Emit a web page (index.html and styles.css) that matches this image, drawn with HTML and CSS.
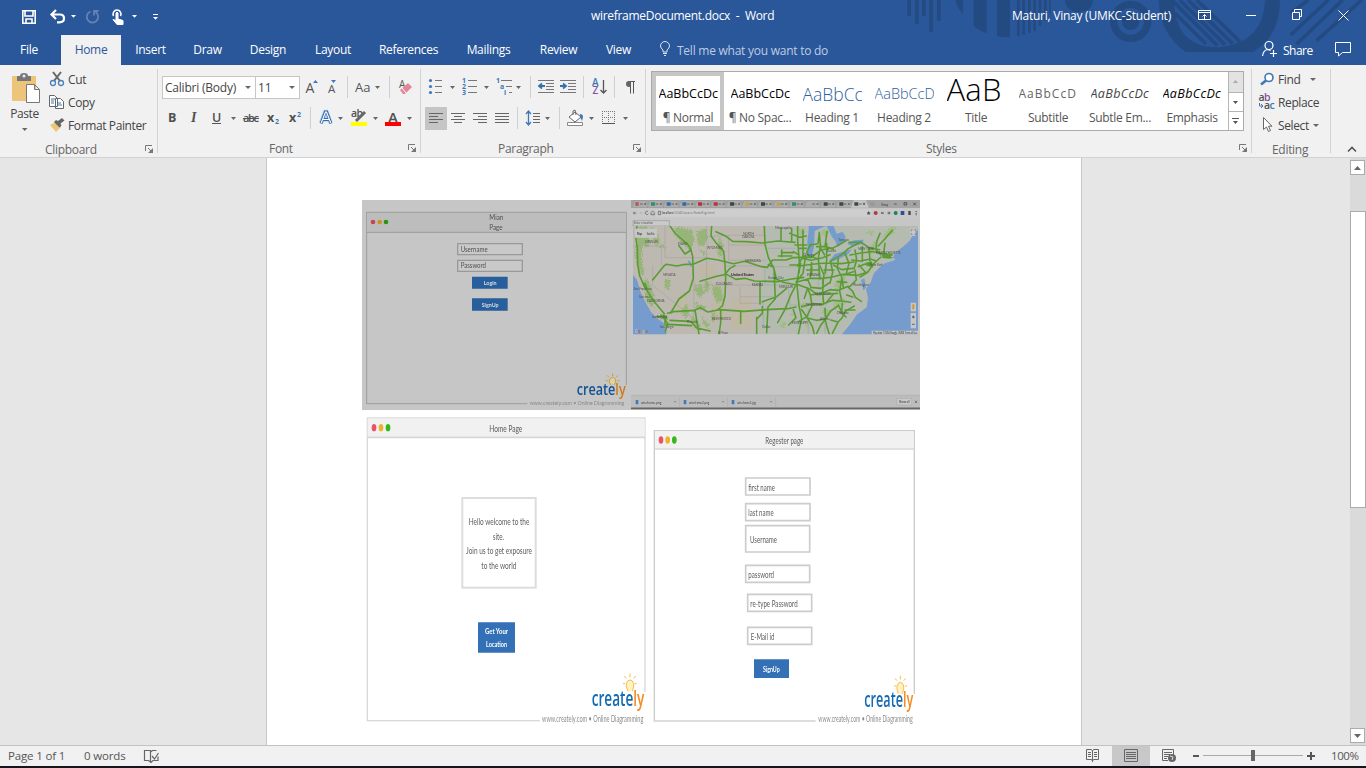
FILE: index.html
```html
<!DOCTYPE html>
<html lang="en">
<head>
<meta charset="utf-8">
<title>wireframeDocument.docx - Word</title>
<link rel="stylesheet" href="styles.css">
</head>
<body>
<div class="app">
<header class="head">
  <svg class="decor" width="466" height="65" viewBox="0 0 1398 195">
    <g fill="#234b82"><path d="M22 0h11v48H22zM45 0h11v71H45zM66 0h11v48H66zM88 0h11v97H88zM111 0h11v62h-11zM166 0h23v43q-17-20-23-43zM221 0h39v101q-24-9-39-22zM291 0h39v111q-20 3-39-3zM351 0h8v108h-8zM367 0h8v104h-8zM384 0h8v99h-8zM400 0h8v92h-8zM416 0h8v78h-8zM432 0h8v62h-8zM448 0h5v40h-5zM495 0h84q-4 36-42 36T495 0z"/><circle cx="692" cy="64" r="26"/><path d="M776 0h46q2 140 128 142Q1090 132 1095 0h45q0 110-82 156H857Q778 100 776 0z"/></g>
    <circle cx="692" cy="64" r="51" fill="none" stroke="#234b82" stroke-width="22"/>
    <path d="M820 5L952 137M824 39L918 132M839 0L975 134M864 0L998 131M890 0L1020 125M1225 0L1172 40M1285 0L1172 105M1328 0L1190 132M1385 0L1250 122" stroke="#234b82" stroke-width="11"/>
  </svg>
  <div class="title">
    <svg width="170" height="35" viewBox="0 0 170 35"><g fill="none" stroke="#fff" stroke-width="1.6"><path d="M22.8 10.8h12.4v12.4H22.8zM25 11v5h8v-5M26 23v-4h6v4"/><path d="M52 14.500h8q4 0 4 4t-5 3.800h-2M56 10l-4.500 4.500L56 19" stroke-width="2.2"/><path d="M90.500 11.500a5.700 5.700 0 1 0 5 .5M94 15.500v-4.500h4.500" stroke="#6482b4" stroke-width="1.800"/><path d="M113.500 16a4 4 0 1 1 7 0"/></g><path d="M116 13q1-2 2 0v6l5 1.500v4h-6l-4-5 3 1z" stroke="#fff" fill="#fff"/><path d="M71 15h5l-2.500 2.800zM132 15h5l-2.500 2.800zM153 17h5l-2.500 2.800zM153 14h5v1h-5z" fill="#fff"/></svg>
    <span class="docname">wireframeDocument.docx&nbsp; -&nbsp; Word</span>
    <span class="user">Maturi, Vinay (UMKC-Student)</span>
    <svg width="174" height="35" viewBox="1192 0 174 35" fill="none" stroke="#fff"><path d="M1198.500 10.500h12v9h-12zM1198 12.500h13M1204.500 19v-4.500m-2 2l2-2 2 2M1246 15.500h10M1292.500 12.500h7v7h-7zM1294.500 12v-2.500h7v7h-2.500M1338.500 10.500l10 10m0-10l-10 10"/></svg>
  </div>
  <nav class="tabs">
    <span class="tab file">File</span><span class="tab active">Home</span><span class="tab t-ins">Insert</span><span class="tab t-draw">Draw</span><span class="tab t-des">Design</span><span class="tab t-lay">Layout</span><span class="tab t-ref">References</span><span class="tab t-mail">Mailings</span><span class="tab t-rev">Review</span><span class="tab t-view">View</span>
    <svg width="32" height="30" viewBox="645 35 32 30" fill="none" stroke="#dde5f2"><path d="M663 52v-2q-2.500-2-2.500-4a4.500 4.500 0 0 1 9 0q0 2-2.500 4v2zM663 53.500h4M664 55.500h2"/></svg>
    <span class="tell">Tell me what you want to do</span>
    <svg width="24" height="30" viewBox="1259 35 24 30" fill="none" stroke="#fff" stroke-width="1.200"><circle cx="1269" cy="45.500" r="4"/><path d="M1262.500 56q1-6 5-6.500l3 1M1273.500 50v7M1270 53.500h7"/></svg>
    <span class="share">Share</span>
    <svg width="52" height="30" viewBox="1314 35 52 30" fill="none" stroke="#fff"><path d="M1335.500 42.500h15v10h-8l-4 3.500v-3.500h-3z"/></svg>
  </nav>
</header>

<section class="ribbon">
  <div class="group g-clip">
    <div class="clipbody">
      <div class="paste">
        <svg width="34" height="36" viewBox="9 70 34 36"><path d="M13 76h24v25H13z" fill="#ecc57b"/><path d="M18 76h3q0-3 4-3t4 3h3v5H18z" fill="#777"/><circle cx="25" cy="76" r="1.500" fill="#eee"/><path d="M27.500 84.500h8l5 5v13h-13zM35.500 84.500v5h5" fill="#fff" stroke="#777"/></svg>
        <span>Paste</span>
        <svg width="6" height="4" viewBox="0 0 6 4"><path d="M0 0h5.500L2.700 3z" fill="#666"/></svg>
      </div>
      <div class="cliplist">
        <span class="cmd"><svg width="19" height="23" viewBox="49 68 19 23"><path d="M53 72l7 9M61 72l-7 9" stroke="#666" stroke-width="2"/><g fill="none" stroke="#4a80b8" stroke-width="1.300"><circle cx="53" cy="83" r="2.500"/><circle cx="61" cy="83" r="2.500"/></g></svg>Cut</span>
        <span class="cmd"><svg width="19" height="23" viewBox="49 91 19 23" fill="#fff" stroke="#666"><path d="M49.500 95.500h5l3 3v8h-8zM55.500 98.500h5l3 3v7h-8z"/><path d="M51 99h4m-4 2h3m-3 2h3M57 103h4m-4 2h5" stroke="#3f78b5"/></svg>Copy</span>
        <span class="cmd"><svg width="19" height="23" viewBox="49 114 19 23"><path d="M50 125l6-3 5 5-5 5z" fill="#ecc57b"/><path d="M54 122l2-2 2 1 4-3 2.500 2.500-4 3 1 2-2 2z" fill="#666"/></svg>Format Painter</span>
      </div>
    </div>
    <div class="label l-clip">Clipboard<svg class="launch" width="9" height="9" viewBox="0 0 9 9"><path d="M.5 6V.5H7M3 3l4 4" fill="none" stroke="#777"/><path d="M8 3v5H3z" fill="#777"/></svg></div>
  </div>

  <div class="group g-font">
    <div class="row">
      <span class="combo c-name">Calibri (Body)<i class="arr"></i></span><span class="combo c-size">11<i class="arr"></i></span>
      <svg width="114" height="24" viewBox="300 75 114 24"><g fill="#555" font-family="Open Sans"><text x="305.500" y="93" font-size="14">A</text><text x="328" y="93" font-size="11.500">A</text><text x="355" y="92" font-size="13">Aa</text><text x="399" y="88" font-size="10">A</text></g><path d="M313 83h5l-2.500-3zM331 80h5l-2.500 3z" fill="#3f78b5"/><path d="M347.500 76v22M389.500 76v22" stroke="#d0d0d0"/><path d="M375 86h5l-2.500 3z" fill="#666"/><path d="M400 90l8-7 4 4-7 7h-2z" fill="#e5859a"/><path d="M402 88l4 5" stroke="#fff"/></svg>
    </div>
    <div class="row">
      <svg width="252" height="24" viewBox="162 106 252 24"><g fill="#505050" font-family="Open Sans" font-size="12.500"><text x="168" y="122" font-weight="700">B</text><text x="191" y="122" font-family="Liberation Serif" font-style="italic" font-weight="700" font-size="14">I</text><text x="212" y="122" font-weight="600">U</text><text x="243" y="122" font-size="11" font-weight="600" textLength="16">abc</text><text x="267" y="122" font-weight="700">x</text><text x="289" y="122" font-weight="700">x</text><text x="351" y="117" font-size="10.500" font-weight="600" textLength="12">ab</text><text x="388" y="123" font-size="15" font-weight="600">A</text></g><g fill="#3f78b5" font-family="Open Sans" font-size="7" font-weight="700"><text x="275" y="124">2</text><text x="297" y="117">2</text></g><path d="M212 123.500h9M243 118.500h16" stroke="#555"/><path d="M321 123l4.200-11h1.200l4.200 11M322.500 119.500h6.500" fill="none" stroke="#b4d2f0" stroke-width="4.500"/><path d="M321 123.500l4.200-11.500h1.600l4.200 11.500M322.500 119.500h6.500" fill="none" stroke="#376da8" stroke-width="2.800"/><path d="M321.200 123l4.300-11h1l4.300 11M322.500 119.500h6.500" fill="none" stroke="#fff" stroke-width="1.100"/><path d="M310.500 107v22" stroke="#d0d0d0"/><path d="M231 117h5l-2.500 3zM338 117h5l-2.500 3zM373 117h5l-2.500 3zM407 117h5l-2.500 3z" fill="#666"/><path d="M356 121l9-9" stroke="#666" stroke-width="3"/><path d="M351 122h16v4h-16z" fill="#ff0"/><path d="M385 122h16v4h-16z" fill="red"/></svg>
    </div>
    <div class="label l-font">Font<svg class="launch" width="9" height="9" viewBox="0 0 9 9"><path d="M.5 6V.5H7M3 3l4 4" fill="none" stroke="#777"/><path d="M8 3v5H3z" fill="#777"/></svg></div>
  </div>

  <div class="group g-para">
    <div class="row">
      <svg width="220" height="24" viewBox="424 75 220 24"><g fill="#3f78b5"><circle cx="430.500" cy="80.500" r="1.600"/><circle cx="430.500" cy="86.500" r="1.600"/><circle cx="430.500" cy="92.500" r="1.600"/><g font-family="Open Sans" font-size="7" font-weight="700"><text x="462" y="83">1</text><text x="462" y="89">2</text><text x="462" y="95">3</text><text x="496" y="83">1</text><text x="500" y="89">a</text><text x="504" y="95">i</text></g></g><path d="M435 80.500h7m-7 6h7m-7 6h7M468 80.500h9m-9 6h9m-9 6h9M501 80.500h11m-6 6h6m-3 6h3M538 80.500h16m-8 3h8m-8 3h8m-8 3h8m-16 3h16M560 80.500h16m-8 3h8m-8 3h8m-8 3h8m-16 3h16" stroke="#777"/><path d="M545 86h-6m3-2.500l-3 2.500 3 2.500M560 86h6m-3-2.500l3 2.500-3 2.500" stroke="#3572b0" stroke-width="1.800" fill="none"/><path d="M450 86h5l-2.500 3zM484 86h5l-2.500 3zM516 86h5l-2.500 3z" fill="#666"/><path d="M530.500 76v22M583.500 76v22M614.500 76v22" stroke="#d0d0d0"/><g font-family="Open Sans" font-size="10" font-weight="600"><text x="592" y="86" fill="#3f78b5">A</text><text x="592.500" y="94" fill="#8250a6">Z</text></g><path d="M603.500 80v13m-3-3l3 3 3-3" fill="none" stroke="#555" stroke-width="1.300"/><path d="M628 81.500h7m-4.500 0v12m3-12v12" stroke="#555"/><path d="M629 81a3 3 0 0 0 0 6h1.500v-6z" fill="#666"/></svg>
    </div>
    <div class="row">
      <svg width="220" height="24" viewBox="424 106 220 24"><path d="M425 107h22v23h-22z" fill="#c5c5c5"/><path d="M429 113.500h14m-14 3h9m-9 3h14m-14 3h9M451 113.500h14m-11 3h8m-11 3h14m-11 3h8M473 113.500h14m-9 3h9m-14 3h14m-9 3h9M495 113.500h14m-14 3h14m-14 3h14m-14 3h14M533 113.500h7m-7 3h7m-7 3h7m-7 3h7" stroke="#666"/><path d="M528.500 111v14m-2.500-11l2.500-3 2.500 3m-5 8l2.500 3 2.500-3" fill="none" stroke="#3f78b5" stroke-width="1.300"/><path d="M517.500 107v22M559.500 107v22" stroke="#d0d0d0"/><path d="M545 117h5l-2.500 3zM589 117h5l-2.500 3zM623 117h5l-2.500 3z" fill="#666"/><path d="M575 112l6 5-6 5-6-5zM573 115v-4l2-1 1 5" fill="#fff" stroke="#666"/><path d="M580 114q3 0 3 3l-1 4-2-4z" fill="#3f78b5"/><path d="M567.500 122.500h15v3h-15z" fill="#fff" stroke="#888"/><path d="M602 111.500h13M602 117.500h13M602.500 111v12M608.500 111v12M614.500 111v12" stroke="#777" stroke-dasharray="1 1"/><path d="M602 123.500h13" stroke="#555"/></svg>
    </div>
    <div class="label l-para">Paragraph<svg class="launch" width="9" height="9" viewBox="0 0 9 9"><path d="M.5 6V.5H7M3 3l4 4" fill="none" stroke="#777"/><path d="M8 3v5H3z" fill="#777"/></svg></div>
  </div>

  <div class="group g-styles">
    <div class="gallery">
      <div class="style sel"><span class="pv">AaBbCcDc</span><span class="nm">¶ Normal</span></div>
      <div class="style"><span class="pv">AaBbCcDc</span><span class="nm">¶ No Spac...</span></div>
      <div class="style"><span class="pv h1">AaBbCc</span><span class="nm">Heading 1</span></div>
      <div class="style"><span class="pv h2">AaBbCcD</span><span class="nm">Heading 2</span></div>
      <div class="style"><span class="pv big">AaB</span><span class="nm">Title</span></div>
      <div class="style"><span class="pv sub">AaBbCcD</span><span class="nm">Subtitle</span></div>
      <div class="style"><span class="pv em soft">AaBbCcDc</span><span class="nm">Subtle Em...</span></div>
      <div class="style"><span class="pv em">AaBbCcDc</span><span class="nm">Emphasis</span></div>
      <svg width="15" height="58" viewBox="0 0 15 58"><path d="M0 0h15v20H0z" fill="#e3e3e3"/><path d="M.5 0v58M0 20.500h15M0 39.500h15" stroke="#b5b5b5"/><path d="M5 11h5L7.500 8z" fill="#aaa"/><path d="M5 29h5l-2.500 3zM5 49h5l-2.500 3zM4 46h7v1H4z" fill="#555"/></svg>
    </div>
    <div class="label l-styles">Styles<svg class="launch" width="9" height="9" viewBox="0 0 9 9"><path d="M.5 6V.5H7M3 3l4 4" fill="none" stroke="#777"/><path d="M8 3v5H3z" fill="#777"/></svg></div>
  </div>

  <div class="group g-edit">
    <div class="editlist">
      <span class="cmd"><svg width="20" height="23" viewBox="1258 68 20 23"><circle cx="1269" cy="77.500" r="4" fill="#fff" stroke="#3f78b5" stroke-width="1.600"/><path d="M1266 80.500l-5 4" stroke="#3f78b5" stroke-width="2.600"/></svg>Find<i class="arr a1"></i></span>
      <span class="cmd"><svg width="20" height="23" viewBox="1258 91 20 23" font-family="Open Sans" font-size="10.500" font-weight="600"><text x="1258.500" y="101" fill="#555">a</text><text x="1264" y="101" fill="#8250a6">b</text><text x="1264" y="108.500" fill="#555">a</text><text x="1269.500" y="108.500" fill="#3f78b5">c</text><path d="M1259.500 103v3h3m-1.500-2l2 2-2 2" fill="none" stroke="#3f78b5"/></svg>Replace</span>
      <span class="cmd"><svg width="20" height="23" viewBox="1258 114 20 23"><path d="M1263.500 117.500v12l3-2.500 2 4.500 2-1-2-4.300h3.500z" fill="#fff" stroke="#666"/></svg>Select<i class="arr a2"></i></span>
    </div>
    <div class="label l-edit">Editing</div>
  </div>
  <svg class="collapse" width="10" height="7" viewBox="0 0 10 7"><path d="M1 5.500l4-4 4 4" fill="none" stroke="#555" stroke-width="1.600"/></svg>
</section>

<main class="workspace">
  <article class="page">
    <div class="pics">
    <svg class="pic" width="269" height="210" viewBox="6 15 807 630">
      <rect x="0" y="0" width="820" height="660" fill="#c6c6c6"/>
      <rect x="20" y="52" width="779" height="574" fill="none" stroke="#9c9c9c" stroke-width="3"/><rect x="21" y="54" width="777" height="57" fill="#bdbdbd"/><path d="M20 112h779" stroke="#999" stroke-width="3"/>
      <circle cx="39" cy="81" r="7" fill="#c7435a"/><circle cx="59" cy="81" r="7" fill="#c9951e"/><circle cx="78" cy="81" r="7" fill="#289514"/>
      <g fill="#505050" font-size="20"><text x="388" y="76" textLength="42" lengthAdjust="spacingAndGlyphs">Mian</text><text x="388" y="104" textLength="40" lengthAdjust="spacingAndGlyphs">Page</text></g>
      <g fill="#c9c9c9" stroke="#999" stroke-width="4"><path d="M293 146h194v33H293zM293 196h194v33H293z"/></g>
      <g fill="#505050" font-size="20"><text x="302" y="170" textLength="81" lengthAdjust="spacingAndGlyphs">Username</text><text x="302" y="220" textLength="76" lengthAdjust="spacingAndGlyphs">Password</text></g>
      <path d="M336 245h107v36H336zM336 310h107v37H336z" fill="#285e9b"/>
      <g fill="#d5dde6" font-size="17" font-weight="700"><text x="371" y="270" textLength="39" lengthAdjust="spacingAndGlyphs">Login</text><text x="365" y="335" textLength="51" lengthAdjust="spacingAndGlyphs">SignUp</text></g>
      <path d="M502 612h304v33H502zM790 570h12v50h-12z" fill="#c6c6c6"/>
      <path d="M753 568q-7-7-5-13 3-8 10-8t9 8q2 6-5 13z" fill="#ded3a0"/><path d="M758 536v7M741 541l5 5M774 541l-5 5M737 557h6M773 557h6M753 570q-7-8-5-15 3-8 10-8t9 8q2 7-5 15" fill="none" stroke="#c99b3e" stroke-width="3"/>
      <text x="650" y="600" font-family="Open Sans" font-size="46" font-weight="600" fill="#125293" textLength="147" lengthAdjust="spacingAndGlyphs">create<tspan fill="#ce7919">ly</tspan></text>
      <text x="509" y="629" fill="#888" font-size="19" textLength="284" lengthAdjust="spacingAndGlyphs">www.creately.com • Online Diagramming</text>
    </svg><svg class="pic" width="289" height="210" viewBox="18 15 867 630">
      <defs>
        <clipPath id="mapclip"><path d="M24 93h855v325H24z"/></clipPath>
        <filter id="rough"><feTurbulence type="fractalNoise" baseFrequency=".25" numOctaves="4" seed="4"/><feDisplacementMap in="SourceGraphic" scale="20" xChannelSelector="R" yChannelSelector="G"/></filter>
        <g id="tab"><path d="M0 38L8 17H43L51 38z" fill="#adadad" stroke="#888"/><path d="M38 24l5 6m0-6l-5 6" stroke="#555" stroke-width="2"/><path d="M25 27h8" stroke="#777" stroke-width="4"/></g>
      </defs>
      <path d="M18 15h867v630H18z" fill="#c6c6c6"/><path d="M18 15h867v25H18z" fill="#a4a4a4"/>
      <use href="#tab" x="20"/><use href="#tab" x="67"/><use href="#tab" x="114"/><use href="#tab" x="161"/><use href="#tab" x="208"/><use href="#tab" x="255"/><use href="#tab" x="302"/><use href="#tab" x="349"/><use href="#tab" x="396"/><use href="#tab" x="443"/><use href="#tab" x="490"/><use href="#tab" x="537"/><use href="#tab" x="584"/><use href="#tab" x="631"/><path d="M678 38l8-22h37l8 22z" fill="#c6c6c6"/><path d="M732 21h15l6 12h-15z" fill="#999"/>
      <g fill="none" stroke-width="11"><path d="M31 27h10" stroke="#b65a55"/><path d="M78 27h12M501 27h12" stroke="#33906a"/><path d="M125 27h12M172 27h12" stroke="#2c6ca8"/><path d="M219 27h12M266 27h12" stroke="#bd3035"/><path d="M315 27h12M408 27h12M596 27h12M643 27h12M688 27h12" stroke="#39484b"/><path d="M361 27h12M455 27h12" stroke="#c3a052"/></g>
      <path d="M702 27h8m4-4l6 7m0-7l-6 7M807 27h8M837 23h8v7h-8zM865 23l8 8m0-8l-8 8" stroke="#333" stroke-width="2" fill="none"/><text x="768" y="32" font-size="13" fill="#333" textLength="22" lengthAdjust="spacingAndGlyphs">Vinay</text>
      <path d="M18 40h867v29H18z" fill="#c8c8c8"/><path d="M93 43h647v22H93z" fill="#cecece"/>
      <path d="M34 54h-9m4-4l-4 4 4 4M69 50a5 5 0 1 0 1 6M78 53l5-5 5 5v6h-10zM100 49h7v10h-7z" fill="none" stroke="#555" stroke-width="2"/><path d="M44 54h7" stroke="#999" stroke-width="2"/><text x="111" y="58" font-size="13" fill="#777" textLength="157" lengthAdjust="spacingAndGlyphs"><tspan fill="#333">localhost</tspan>:51042/source/HomePage.html</text>
      <g fill="#b4393b"><circle cx="752" cy="54" r="6"/><circle cx="812" cy="54" r="6" fill="#18864c"/><path fill="#285297" d="M827 48h11v12h-11z"/><path fill="#444" d="M850 48h7v12h-7zM872 48h3v3h-3zM872 53h3v3h-3zM872 58h3v3h-3z"/><path fill="#777" d="M768 51h8v6h-8zM788 50h8v8h-8z"/><path fill="#555" d="M731 48l2 4 4 1-3 3 1 4-4-2-4 2 1-4-3-3 4-1z"/></g>
      <path d="M24 77h109v16H24z" fill="#cacaca" stroke="#999" stroke-width="2"/><text x="27" y="88" font-size="11" fill="#555" textLength="57" lengthAdjust="spacingAndGlyphs">Enter a location</text>
      <g clip-path="url(#mapclip)">
        <path d="M24 93h855v325H24z" fill="#bdb9b1"/>
        <path d="M420 93h459v325H400z" fill="#b5bbb0"/>
        <g fill="#bfb89c" opacity=".6"><path d="M260 320h45v55h-45zM220 210h50v35h-50zM150 310l30-20 15 40-40 30zM320 310h60v90h-60z"/></g>
        <g filter="url(#rough)" fill="#91b36f" opacity=".85">
          <path d="M40 95l25-2 5 25 5 25-10 15-12-10-3 30 8 60-10 5-18-60zM80 95l15 15 10 30-12 15-8-25zM150 95l50 10 8 30-10 35-20-20-25-25zM215 110l28-10 5 35-15 20-15-5zM222 160l20 10-4 15zM60 250l12 10 15 40-4 40-16-20-12-50zM120 248l16 12-3 25-14-4zM205 275l25-5 8 25-15 15zM240 255l14 8-5 30-12-5zM262 270l25 5 10 40-20 8-14-25zM210 320l15 10 20 4-10 12-20-5zM195 362l20 10 15 25-20 3zM280 120l15 30-5 40-12-15zM170 350l15-25 5 35-10 12zM95 155l20-8 5 12zM262 345l10 15-5 25-8-10zM232 360l10 20 12 10-8 10-12-15z"/>
          <path fill="#9dbb7e" d="M525 330l20-10 5 12-20 12zM590 340l22 5 2 15-14 10zM625 325l30-15 10 10-35 25zM520 100l22 8-8 15-12-4zM590 102l20 2-4 20-15-5zM730 170l15-30 12 3-10 34zM770 130l25-35 20-2-10 25zM625 270l30-30 10 8-30 38zM470 378l12 4-3 18-12-5zM540 380l10 5-4 20zM720 110l30 0-12 12zM500 348l10 10-12 5z"/>
        </g>
        <path d="M24 240l12 14 10 35 14 30 18 32 20 20 18 13 10 36H24zM879 105l-12 10-13 22-20 18-22 16-8 17 8 6-36 12-14 13-15 15-10 28-14 19 6 28-4 28-30 22-18 27-30 36h245z" fill="#769cce"/>
        <path d="M551 93h52l-14 5-20 10-2 48-9 37-9-5-2-48 4-35zM605 93l20-2 10 25 18-5 9 14-10 21-14 10-7-18-10-12zM615 195l15-18 36-10 14-4-10 14-35 18-17 5zM666 146l22-10 28-2-4 13-30 7zM708 255l10-5 5 28-8 8zM188 196l7 2 7 17-8-2z" fill="#769cce"/>
        <path d="M24 153h85v58M120 93v95h125M245 93v180M245 125l66-4v75h110M311 150h115M311 121h108M302 213h118v55M206 270h280M206 215v150M345 275v50h70v75M83 211v60l110 88M345 305h100M429 160h82M429 215h92M495 330h110M490 275l5 60M580 200v75M605 190v60M550 340v78M600 340v78" fill="none" stroke="#999b96" stroke-width="1.200"/>
        <g fill="none" stroke="#599d32" stroke-width="4.800" stroke-linejoin="round" stroke-linecap="round">
          <path d="M36 93l-4 30 5 40 1 45 6 35 12 25 14 25 16 25 32 38M83 255l32-40 8-7 33 5 17-4 33-2 40-17 34 5 45 11 35-7 49 16 18 2 16-22h40l20-7 60-2 18 7"/>
          <path d="M135 93l17 24 37 32 9 16 5 20 2 65-12 38-31 24-25 42M198 165l-18 12-18-25M260 93l-2 30 15 20 23 26 4 40 2 40-2 55-8 29-15 12"/>
          <path d="M225 259l50-15 30-6 27 15 27-3 30 8 68 2 43-8 36-5M300 238l15-18 15-8M128 355l18-5 62-4 18-8 22 13 35-7 75 5 65-5 65-3 25-5M135 376l62 3 18 20 40 9M210 345l12 73M125 388l75 4M287 348v36l-5 34M347 350v35M376 353M412 335v20l-15 15M95 365h25v25M108 360l20 25-7 25"/>
          <path d="M273 110l30 14 20 15 40 1 50 4 45-6 52 4M418 93l2 55 10 39 17 34 4 90-22 25-4 77M430 209l16 8 7 30M468 100v36M460 183h40M470 165v20M470 173h35M395 368v48M412 320l43-15 30-25M405 262v65"/>
          <path d="M449 250l25 12 40 8M518 93v45l6 75-8 50-20 40-16 40-22 40M500 100v38M534 105v78l-16 30M516 270l6 62 8 38-10 48M494 115l30 12 20-4M510 150h35M505 170l14 8M495 210l26 0M520 160h24"/>
          <path d="M530 190l28 6 35-8 22-9M521 213l48-6 35-3 45 2 38-5M540 195l-6 40-20 25M560 203l-4 44M585 160l-5 30 5 62M605 145v50l-5 40M575 155h30l20 8"/>
          <path d="M555 150l24-4 4-34M583 115l4 45 12 20M606 110l-6 45M560 186l30-22 36-6 36-20M672 142l35-1 25 17 32 6M707 141l-37 20-20 18-35 20"/>
          <path d="M514 262l42-12 35 0 32-4 30-8 45 3 30-10M548 253l10 24 30 3 24-16M516 268l40 15 20 16 32-2 30-2M585 213l12 27-4 25M617 200l6 32-8 32M640 190l-3 30 13 26 5 30M660 175l12 30-8 30"/>
          <path d="M545 225h38M560 240v-25M597 225h30M625 210l25 14 33-4M675 180l33-6 34-4M690 165l5 30-8 26M712 155v44M732 158l3 40M680 195l26 3 30-6 16 5M700 215l20-8 22 8M720 230l-18-20"/>
          <path d="M765 115l-10 25-2 25 15 15M802 106l-22 25-20 22M780 145l-5 35M745 170l30 6 27 4M774 182l26 6M768 186l-20 18-20 28-23 14"/>
          <path d="M530 335l32-9 30 2 30-12 28 2 27 4M560 325l-4-25-8-20M595 253l-2 38 3 37M555 300l30-4 30-12 25 2 30-12M650 318l-6-30 6-35M668 275l15 14 8 18 18 12"/>
          <path d="M530 344l14 20 18 30 6 24M562 330l-16 34-25 16M544 368l30 8 28-4M575 415l12-24 15-19 15-24 20-14M600 372l5 20 8 26M617 375l22 6 12-12 10-20 27-16M652 325l-2 30M640 380l-18 35M600 340l2 32M505 344l8 24-22 22"/>
          <path d="M527 205l-6 30M548 280l-10 30M625 297l-20 25M637 260l28 2M655 240l30-10M690 225l4 30-20 20M665 300l18 6M660 345h30M645 350l18 16M640 330l10 20M553 186l-8-14 12-25"/>
        </g>
        <path d="M530 186l12-6 8 8-10 8zM772 176l28 5-6 10-22-2zM722 203l18-4 4 10-18 5zM50 262l12 3 6 15-9 0zM112 358l14 4 2 12-12-2z" fill="#599d32"/>
        <g fill="#4c4f4b" font-size="9"><text x="318" y="244" font-size="13" font-weight="700" fill="#222" textLength="69" lengthAdjust="spacingAndGlyphs">United States</text><text x="115" y="242">NEVADA</text><text x="60" y="143">OREGON</text><text x="158" y="150">IDAHO</text><text x="246" y="163">WYOMING</text><text x="355" y="119">NORTH</text><text x="352" y="129">DAKOTA</text><text x="361" y="201">NEBRASKA</text><text x="272" y="270">COLORADO</text><text x="380" y="274">KANSAS</text><text x="462" y="278">MISSOURI</text><text x="260" y="375">NEW MEXICO</text><text x="66" y="321">CALIFORNIA</text><text x="26" y="284">San Francisco</text><text x="42" y="308">San Jose</text><text x="80" y="369">Los Angeles</text><text x="105" y="399">San Diego</text><text x="185" y="383">Phoenix</text><text x="430" y="252">Kansas City</text><text x="535" y="184">Chicago</text><text x="605" y="172">Detroit</text><text x="640" y="137">Toronto</text><text x="700" y="164">NEW YORK</text><text x="752" y="177">MASSACHUSETTS</text><text x="735" y="212">New York</text><text x="684" y="272">Washington</text><text x="500" y="387">MISSISSIPPI</text><text x="585" y="375">Atlanta</text><text x="542" y="333">TENNESSEE</text><text x="570" y="299">KENTUCKY</text><text x="545" y="242">INDIANA</text><text x="635" y="358">Charlotte</text><text x="280" y="416">El Paso</text><text x="412" y="400">Dallas</text><text x="450" y="103">Minneapolis</text></g>
      </g>
      <path d="M30 101h66v27H30zM857 323h16v26h-16zM857 354h16v46h-16zM856 100h16v23h-16zM740 407h139v11H740z" fill="#c6c6c6"/><g fill="#333" font-size="10"><text x="36" y="119" font-weight="700" textLength="15" lengthAdjust="spacingAndGlyphs">Map</text><text x="65" y="119" textLength="24" lengthAdjust="spacingAndGlyphs">Satellite</text><text x="744" y="416" font-size="9" textLength="133" lengthAdjust="spacingAndGlyphs">Map data ©2016 Google, INEGI   Terms of Use</text></g>
      <path d="M865 362v8m-4-4h8M861 388h8" stroke="#333" stroke-width="2"/><path d="M865 328v15" stroke="#d29827" stroke-width="6"/><path d="M859 109v-5h4m5 0h4v5m0 5v5h-4m-5 0h-4v-5" fill="none" stroke="#777" stroke-width="2"/>
      <text x="30" y="413" font-size="15" font-weight="700" textLength="38" lengthAdjust="spacingAndGlyphs"><tspan fill="#a9c1e6">G</tspan><tspan fill="#c94c41">o</tspan><tspan fill="#c79b27">o</tspan><tspan fill="#a9c1e6">g</tspan><tspan fill="#8ab99a">l</tspan><tspan fill="#c94c41">e</tspan></text>
      <path d="M18 602h867v37H18z" fill="#bdbdbd"/><path d="M18 601h867M164 607v28M308 607v28M452 607v28" stroke="#aaa" stroke-width="2"/><path d="M18 640h867" stroke="#666" stroke-width="5"/>
      <path d="M32 615h8v13h-8zM176 615h8v13h-8zM320 615h8v13h-8z" fill="#397fb5"/><g fill="#444" font-size="13"><text x="48" y="627" textLength="61" lengthAdjust="spacingAndGlyphs">wireframe.png</text><text x="192" y="627" textLength="61" lengthAdjust="spacingAndGlyphs">wireframe2.png</text><text x="337" y="627" textLength="56" lengthAdjust="spacingAndGlyphs">wireframe1.jpg</text></g><path d="M147 622l3-3 3 3M291 622l3-3 3 3M435 622l3-3 3 3M870 617l6 7m0-7l-6 7" fill="none" stroke="#555" stroke-width="2"/><path d="M815 610h45v20h-45z" fill="#c8c8c8" stroke="#999"/><text x="822" y="624" font-size="12" fill="#333" textLength="31" lengthAdjust="spacingAndGlyphs">Show all</text>
    </svg>
    </div>
    <div class="pics">
    <svg class="pic" width="287" height="320" viewBox="6 -6 861 960">
      <rect x="22" y="18" width="833" height="908" fill="#fff" stroke="#d9d9d9" stroke-width="4"/><path d="M23 20h831v54H23z" fill="#f1f1f1"/><path d="M22 76h833" stroke="#d6d6d6" stroke-width="5"/>
      <ellipse cx="42" cy="47" rx="7" ry="11" fill="#e95366"/><ellipse cx="63" cy="47" rx="7" ry="11" fill="#edb12b"/><ellipse cx="84" cy="47" rx="7" ry="11" fill="#32b817"/>
      <g fill="#595959" font-size="28"><text x="388" y="59" textLength="99" lengthAdjust="spacingAndGlyphs">Home Page</text></g>
      <rect x="307" y="258" width="220" height="269" fill="#fff" stroke="#ddd" stroke-width="6"/>
      <g fill="#5c5c5c" font-size="28"><text x="326" y="340" textLength="182" lengthAdjust="spacingAndGlyphs">Hello welcome to the</text><text x="398" y="384" textLength="34" lengthAdjust="spacingAndGlyphs">site.</text><text x="318" y="427" textLength="198" lengthAdjust="spacingAndGlyphs">Join us to get exposure</text><text x="364" y="470" textLength="105" lengthAdjust="spacingAndGlyphs">to the world</text></g>
      <path d="M354 631h111v91H354z" fill="#3370b5"/><g fill="#fff" font-size="24" font-weight="700"><text x="375" y="667" textLength="69" lengthAdjust="spacingAndGlyphs">Get Your</text><text x="378" y="704" textLength="63" lengthAdjust="spacingAndGlyphs">Location</text></g>
      <path d="M540 908h320v40H540zM847 840h13v85h-13z" fill="#fff"/>
      <path d="M805 838q-8-15-6-23 3-11 11-11t11 11q2 8-5 23z" fill="#fff3c4"/><path d="M810 785v11M793 792l6 7M827 792l-6 7M789 815h6M824 815h6M804 838q-7-15-5-23 3-11 11-11t11 11q2 8-4 23" fill="none" stroke="#f8bb50" stroke-width="3"/>
      <text x="695" y="881" font-family="Open Sans" font-size="62" font-weight="600" fill="#146bb3" textLength="158" lengthAdjust="spacingAndGlyphs">create<tspan fill="#f58b22">ly</tspan></text>
      <text x="546" y="929" fill="#8c8c8c" font-size="26" textLength="304" lengthAdjust="spacingAndGlyphs">www.creately.com • Online Diagramming</text>
    </svg><svg class="pic" width="271" height="320" viewBox="12 -6 813 960">
      <rect x="28" y="56" width="780" height="871" fill="#fff" stroke="#ccc" stroke-width="4"/><path d="M30 58h776v50H30z" fill="#f1f1f1"/><path d="M28 111h780" stroke="#d6d6d6" stroke-width="5"/>
      <ellipse cx="48" cy="84" rx="7" ry="11" fill="#e95366"/><ellipse cx="68" cy="84" rx="7" ry="11" fill="#edb12b"/><ellipse cx="88" cy="84" rx="7" ry="11" fill="#32b817"/>
      <path d="M302 198h193v51H302zM302 275h193v51H302zM302 341h192v79H302zM302 460h192v51H302zM308 547h192v51H308zM308 646h192v51H308z" fill="#fff" stroke="#ccc" stroke-width="5"/>
      <g fill="#5c5c5c" font-size="28"><text x="361" y="97" textLength="114" lengthAdjust="spacingAndGlyphs">Regester page</text><text x="310" y="236" textLength="80" lengthAdjust="spacingAndGlyphs">first name</text><text x="310" y="313" textLength="76" lengthAdjust="spacingAndGlyphs">last name</text><text x="315" y="394" textLength="81" lengthAdjust="spacingAndGlyphs">Username</text><text x="310" y="499" textLength="77" lengthAdjust="spacingAndGlyphs">password</text><text x="316" y="586" textLength="142" lengthAdjust="spacingAndGlyphs">re-type Password</text><text x="317" y="684" textLength="71" lengthAdjust="spacingAndGlyphs">E-Mail id</text></g>
      <path d="M327 742h105v56H327z" fill="#3370b5"/><text x="354" y="780" fill="#fff" font-size="24" font-weight="700" textLength="50" lengthAdjust="spacingAndGlyphs">SignUp</text>
      <path d="M512 908h310v40H512zM800 845h13v80h-13z" fill="#fff"/>
      <path d="M761 845q-7-15-5-23 3-11 10-11t10 11q2 8-5 23z" fill="#fff3c4"/><path d="M766 791v11M750 799l6 7M782 799l-6 7M747 822h6M780 822h6M760 845q-6-15-4-23 3-11 10-11t10 11q2 8-4 23" fill="none" stroke="#f8bb50" stroke-width="3"/>
      <text x="658" y="884" font-family="Open Sans" font-size="62" font-weight="600" fill="#146bb3" textLength="147" lengthAdjust="spacingAndGlyphs">create<tspan fill="#f58b22">ly</tspan></text>
      <text x="520" y="930" fill="#8c8c8c" font-size="26" textLength="283" lengthAdjust="spacingAndGlyphs">www.creately.com • Online Diagramming</text>
    </svg>
    </div>
  </article>
  <div class="scroll">
    <span class="sbtn"><svg width="7" height="4" viewBox="0 0 7 4"><path d="M0 4h7L3.500 0z" fill="#666"/></svg></span>
    <span class="thumb"></span>
    <span class="sbtn down"><svg width="7" height="4" viewBox="0 0 7 4"><path d="M0 0h7L3.500 4z" fill="#666"/></svg></span>
  </div>
</main>

<footer class="status">
  <span class="pages">Page 1 of 1</span><span class="words">0 words</span>
  <svg width="16" height="15" viewBox="143 748 16 15" fill="none" stroke="#666"><path d="M150.500 761.500v-12h-6v10h4l2.500 2 2-2h5v-4M150.500 751l2-1.500h4M152 755l2.500 3 4-6" stroke-width="1.200"/></svg>
  <svg class="views" width="245" height="20" viewBox="1078 746 245 20"><path d="M1112 746h38v20h-38z" fill="#c8c8c8"/><g fill="none" stroke="#666"><path d="M1092.500 751v11M1086.500 749.500h5l1 1.500 1-1.500h5v10h-5l-1 1.500-1-1.500h-5zM1088 752.500h3m-3 2h3m-3 2h3M1094 752.500h3m-3 2h3m-3 2h3M1124.500 749.500h13v12h-13zM1126 752.500h10m-10 2h10m-10 2h10m-10 2h10M1168 760.500h-5.500v-11h11v5M1164 752.500h8m-8 2h6m-6 2h4m-4 2h3"/></g><circle cx="1172" cy="758" r="4" fill="#666"/><path d="M1170 756l3 1-1 3" stroke="#ddd" fill="none"/><path d="M1193 756h6M1307 756h8m-4-4v8" stroke="#555" stroke-width="2"/><path d="M1203 755.500h100" stroke="#aaa"/><path d="M1251 750h4v11h-4z" fill="#666"/></svg>
  <span class="zoom">100%</span>
</footer>
<div class="edge"></div>
</div>
</body>
</html>
```
FILE: styles.css
```css
* { box-sizing: border-box; }
body { margin: 0; font: 12px "Open Sans", "Noto Sans", sans-serif; color: #444; overflow: hidden; }
svg { display: block; flex: none; }
.app { width: 1366px; height: 768px; display: flex; flex-direction: column; background: #e6e6e6; }

.head { position: relative; height: 65px; background: #2a579a; color: #fff; }
.decor { position: absolute; left: 900px; top: 0; }
.title, .tabs { position: relative; display: flex; align-items: center; white-space: nowrap; }
.title { height: 35px; padding-bottom: 4px; letter-spacing: -.3px; }
.title svg { align-self: flex-start; }
.docname { margin-left: 421px; width: 421px; }
.user { width: 180px; letter-spacing: -.25px; }
.tabs { height: 30px; }
.tab { height: 30px; line-height: 30px; text-align: center; letter-spacing: -.3px; }
.file { width: 61px; padding-right: 3px; }
.active { width: 60px; background: #f1f1f1; color: #2a579a; }
.t-ins { width: 59px; }
.t-draw { width: 55px; }
.t-des { width: 66px; }
.t-lay { width: 64px; }
.t-ref { width: 87px; }
.t-mail { width: 73px; }
.t-rev { width: 67px; }
.t-view { width: 53px; }
.tell { width: 582px; color: #bfcce2; letter-spacing: -.25px; }
.share { width: 31px; letter-spacing: -.5px; }

.ribbon { height: 93px; display: flex; background: #f1f1f1; border-bottom: 1px solid #d2d2d2; }
.group { position: relative; display: flex; flex-direction: column; padding-top: 10px; flex: none; }
.group::after { content: ""; position: absolute; right: 0; top: 4px; height: 84px; width: 1px; background: #d2d2d2; }
.g-clip { width: 158px; padding-top: 3px; }
.g-font { width: 263px; padding-left: 4px; }
.g-para { width: 225px; padding-left: 3px; }
.g-styles { width: 606px; padding: 6px 0 0 5px; }
.g-edit { width: 79px; padding-top: 3px; }
.row { display: flex; height: 24px; margin-bottom: 7px; align-items: center; }
.clipbody { display: flex; height: 73px; }
.paste { width: 49px; display: flex; flex-direction: column; align-items: center; padding-top: 2px; }
.paste span { line-height: 17px; margin: -1px 0 6px; letter-spacing: -.4px; }
.cliplist, .editlist { display: flex; flex-direction: column; }
.editlist { height: 73px; padding-left: 6px; }
.cmd { display: flex; align-items: center; height: 23px; white-space: nowrap; letter-spacing: -.38px; }
.arr { border: 3px solid transparent; border-top-color: #666; border-bottom: 0; }
.a1 { margin-left: 10px; }
.a2 { margin-left: 4px; }
.combo { height: 23px; background: #fff; border: 1px solid #c6c6c6; display: flex; align-items: center; justify-content: space-between; padding: 0 4px 0 2px; white-space: nowrap; letter-spacing: -.22px; }
.c-name { width: 94px; }
.c-size { width: 44px; border-left: 0; }
.label { display: flex; align-items: center; height: 16px; color: #666; position: relative; letter-spacing: -.3px; }
.launch { margin-left: auto; margin-right: 4px; }
.l-clip { padding-left: 45px; }
.l-font { padding-left: 107px; margin-top: 3px; }
.l-para { padding-left: 74px; margin-top: 3px; }
.l-styles { padding-left: 275px; margin-top: 9px; }
.l-edit { padding-left: 20px; }
.gallery { width: 593px; height: 60px; background: #fff; border: 1px solid #ababab; display: flex; }
.gallery svg { margin-left: auto; }
.style { width: 72px; height: 58px; display: flex; flex-direction: column; align-items: center; padding-top: 5px; flex: none; }
.sel { box-shadow: inset 0 0 0 4px #c6c6c6; }
.pv { width: 59px; height: 32px; line-height: 34px; overflow: hidden; white-space: nowrap; color: #000; font-size: 12.500px; letter-spacing: 0; }
.nm { line-height: 17px; color: #555; letter-spacing: -.3px; white-space: nowrap; }
.h1 { font-size: 17.500px; font-weight: 300; color: #2e5e9c; }
.h2 { font-size: 14.500px; font-weight: 300; color: #2e5e9c; }
.big { font-size: 31px; line-height: 25px; font-weight: 300; letter-spacing: .2px; }
.sub { font-size: 12px; color: #666; letter-spacing: 1px; }
.em { font-style: italic; letter-spacing: .35px; }
.soft { color: #444; }
.collapse { margin: 81px 0 0 16px; }

.workspace { height: 587px; display: flex; background: #e6e6e6; overflow: hidden; }
.page { width: 816px; margin-left: 266px; background: #fff; border: solid #c6c6c6; border-width: 0 1px; padding: 42px 0 0 95px; }
.pics { display: flex; }
.pic { font-family: Lato, sans-serif; filter: blur(.4px); }
.scroll { margin-left: auto; width: 16px; background: #dadada; padding: 2px 0; display: flex; flex-direction: column; }
.sbtn { height: 15px; width: 15px; background: #fff; border: 1px solid #ababab; display: flex; align-items: center; justify-content: center; }
.thumb { height: 297px; margin-top: 36px; background: #fff; border: 1px solid #ababab; }
.down { margin-top: auto; }

.status { height: 21px; background: #f1f1f1; border-top: 1px solid #c2c2c2; display: flex; align-items: center; padding-left: 8px; white-space: nowrap; font-size: 11.500px; color: #555; letter-spacing: -.15px; }
.pages, .words, .zoom { padding-bottom: 2px; }
.pages { width: 76px; }
.words { width: 59px; }
.views { margin-left: auto; }
.zoom { width: 43px; padding-left: 8px; letter-spacing: -.4px; }
.edge { height: 2px; background: #15151c; }
```
